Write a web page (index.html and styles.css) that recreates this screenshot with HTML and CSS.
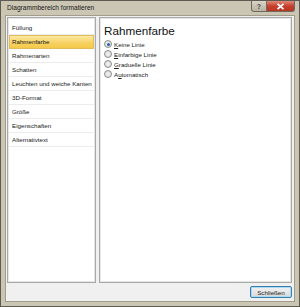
FILE: index.html
```html
<!DOCTYPE html>
<html lang="de">
<head>
    <meta charset="UTF-8">
    <title>Diagrammbereich formatieren</title>
    <link rel="stylesheet" href="styles.css">
</head>
<body>
    <div class="window">
        <div class="titlebar">
            <span class="title">Diagrammbereich formatieren</span>
            <div class="caption-buttons">
                <span class="cap-btn help">?</span>
                <span class="cap-btn close">
                    <svg width="9" height="7" viewBox="0 0 9 7"><path d="M1.5 0.8 L7.5 6.2 M7.5 0.8 L1.5 6.2" stroke="#fff" stroke-width="1.8"/></svg>
                </span>
            </div>
        </div>

        <div class="client">
            <div class="panes">
                <ul class="nav">
                    <li>Füllung</li>
                    <li class="active">Rahmenfarbe</li>
                    <li>Rahmenarten</li>
                    <li>Schatten</li>
                    <li>Leuchten und weiche Kanten</li>
                    <li>3D-Format</li>
                    <li>Größe</li>
                    <li>Eigenschaften</li>
                    <li>Alternativtext</li>
                </ul>

                <div class="content">
                    <h2>Rahmenfarbe</h2>
                    <label class="option"><span class="radio checked"></span><span><u>K</u>eine Linie</span></label>
                    <label class="option"><span class="radio"></span><span><u>E</u>infarbige Linie</span></label>
                    <label class="option"><span class="radio"></span><span><u>G</u>raduelle Linie</span></label>
                    <label class="option"><span class="radio"></span><span>A<u>u</u>tomatisch</span></label>
                </div>
            </div>

            <div class="footer">
                <button class="close-btn">Schließen</button>
            </div>
        </div>
    </div>
</body>
</html>
```

FILE: styles.css
```css
body {
    margin: 0;
    font-family: "Liberation Sans", Arial, sans-serif;
    color: #1e1e1e;
}

.window {
    width: 300px;
    height: 307px;
    box-sizing: border-box;
    border: 1px solid #5d5a52;
    background: #cbc5b3;
    padding: 0 4px 4px 4px;
    display: flex;
    flex-direction: column;
}

.titlebar {
    height: 14px;
    display: flex;
    align-items: flex-start;
}

.title {
    font-size: 6.6px;
    line-height: 14px;
    padding-left: 2px;
    color: #1a1a1a;
}

.caption-buttons {
    margin-left: auto;
    margin-right: 0px;
    display: flex;
}

.cap-btn {
    height: 10px;
    display: flex;
    align-items: center;
    justify-content: center;
    border: 1px solid #6f6a5d;
    border-top: none;
}

.help {
    width: 14px;
    background: linear-gradient(#d9d4c6, #b9b3a2);
    font-size: 7px;
    font-weight: bold;
    color: #4a4a4a;
    border-radius: 0 0 0 3px;
}

.close {
    width: 27px;
    background: linear-gradient(#e08a78, #c5412f 50%, #b8351f);
    border-left: none;
    border-radius: 0 0 3px 0;
}

.client {
    flex: 1;
    background: #f0f0f0;
    border: 1px solid #a29c8a;
    padding: 1px 2px 0 1px;
    display: flex;
    flex-direction: column;
}

.panes {
    flex: 1;
    display: flex;
    gap: 3px;
}

.nav {
    width: 89px;
    box-sizing: border-box;
    margin: 0;
    padding: 3px 1px 0 1px;
    list-style: none;
    background: #fff;
    border: 1px solid #a8a8a8;
    box-shadow: inset 0 0 0 1px #e6e6e6;
}

.nav li {
    height: 14px;
    line-height: 14px;
    font-size: 6.2px;
    padding-left: 3px;
    border-bottom: 1px solid #ececec;
    box-sizing: border-box;
    color: #222;
}

.nav li.active {
    background: linear-gradient(#fdeaa2, #f7d165 55%, #f5c947);
    border: 1px solid #e2bb5a;
    padding-left: 2px;
    line-height: 12px;
}

.content {
    flex: 1;
    background: #fff;
    border: 1px solid #a8a8a8;
    box-shadow: inset 0 0 0 1px #e6e6e6;
    padding: 6px 4px 0 4px;
}

.content h2 {
    margin: 0 0 1px 0;
    font-size: 11.7px;
    font-weight: normal;
    line-height: 14px;
    color: #111;
}

.option {
    display: flex;
    align-items: center;
    gap: 2px;
    height: 10px;
    font-size: 6.2px;
    color: #222;
}

.option u {
    text-decoration-thickness: 0.5px;
}

.radio {
    width: 6px;
    height: 6px;
    border-radius: 50%;
    border: 1px solid #8e8f8f;
    background: radial-gradient(circle, #f4f4f4, #d4d4d4);
    flex: none;
    position: relative;
}

.radio.checked::after {
    content: "";
    position: absolute;
    left: 1.5px;
    top: 1.5px;
    width: 3px;
    height: 3px;
    border-radius: 50%;
    background: #2a5fa8;
}

.footer {
    height: 18px;
    display: flex;
    justify-content: flex-end;
    align-items: flex-start;
}

.close-btn {
    margin-top: 3px;
    width: 42px;
    height: 12px;
    padding: 0;
    font-family: "Liberation Sans", Arial, sans-serif;
    font-size: 6.2px;
    color: #1e1e1e;
    background: linear-gradient(#f2f2f2, #e6e6e6 50%, #d8d8d8);
    border: 1px solid #3d7bad;
    border-radius: 2px;
    box-shadow: inset 0 0 0 1px #a6dcf4;
}
```
